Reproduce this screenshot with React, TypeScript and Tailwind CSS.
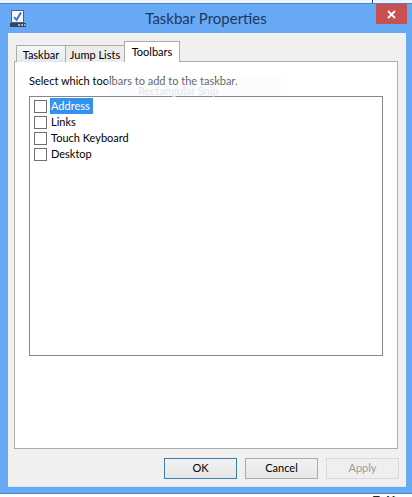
import React from 'react';

const TOOLBARS = ['Address', 'Links', 'Touch Keyboard', 'Desktop'];

const TitleIcon = () => (
  <svg width="18" height="20" viewBox="0 0 18 20" className="shrink-0">
    <rect x="1.5" y="0.5" width="12" height="12" fill="#f4f6fa" stroke="#55606e" />
    <path d="M4 7l2.5 3L11 2.5" fill="none" stroke="#2f6fd0" strokeWidth="1.8" />
    <rect x="0" y="13" width="16" height="4" fill="#34465c" />
    <rect x="8" y="14" width="2" height="2" fill="#9db4cc" />
    <rect x="11" y="14" width="2" height="2" fill="#9db4cc" />
    <rect x="14" y="14" width="1.5" height="2" fill="#9db4cc" />
  </svg>
);

const App: React.FC = () => {
  return (
    <div className="w-[412px] h-[497px] overflow-hidden bg-white text-[11px] text-black font-['Lato','Noto_Sans',sans-serif] relative">
      <div className="h-[3px] bg-[#eef3f9]" />
      <div className="w-[412px] h-[491px] border-y border-[#4c86c8] bg-[#68a9f6] flex flex-col">
        {/* title bar */}
        <div className="h-[29px] shrink-0 flex items-start relative">
          <div className="ml-[10px] mt-[6px]">
            <TitleIcon />
          </div>
          <div className="absolute inset-x-0 top-[4px] text-center text-[15px] leading-[20px] text-[#1b3a5c]">Taskbar Properties</div>
          <div className="w-[31px] h-[20px] ml-auto mr-[5px] bg-[#c75050] flex items-center justify-center">
            <svg width="9" height="9" viewBox="0 0 9 9">
              <path d="M1 1l7 7M8 1L1 8" stroke="#fff" strokeWidth="1.8" />
            </svg>
          </div>
        </div>

        {/* client area */}
        <div className="w-[398px] h-[454px] ml-[8px] bg-[#f0f0f0] border-b border-[#d8e8fb] px-[6px] pt-[8px] flex flex-col">
          {/* tabs */}
          <div className="h-[21px] flex items-end pl-[2px] relative z-10 -mb-px">
            <div className="w-[50px] h-[17px] border border-b-0 border-[#acacac] bg-gradient-to-b from-[#f4f8fc] to-[#e4e9ee] flex items-center justify-center leading-none">Taskbar</div>
            <div className="w-[59px] h-[17px] border border-l-0 border-b-0 border-[#acacac] bg-[#ececec] flex items-center justify-center leading-none">Jump Lists</div>
            <div className="w-[56px] h-[21px] -ml-px border border-b-0 border-[#acacac] bg-white flex items-start pt-[4px] justify-center leading-none">Toolbars</div>
          </div>

          {/* tab panel */}
          <div className="w-[384px] h-[388px] border border-[#acacac] bg-white pl-[14px] pt-[13px]">
            <div className="leading-[11px]">Select which toolbars to add to the taskbar.</div>
            <div className="w-[354px] h-[260px] mt-[10px] border border-[#828790] bg-white pl-[4px] pt-[1px] flex flex-col">
              {TOOLBARS.map((name, i) => (
                <div key={name} className="h-[16px] flex items-center gap-[3px]">
                  <div className="w-[13px] h-[13px] border border-[#707070] bg-white" />
                  <span className={i === 0 ? 'bg-[#3391f0] text-white px-[1px] w-[43px] leading-[16px]' : 'px-[1px] leading-[16px]'}>{name}</span>
                </div>
              ))}
            </div>
          </div>

          {/* buttons */}
          <div className="mt-[9px] pr-[1px] flex justify-end gap-[8px]">
            <div className="w-[73px] h-[21px] border border-[#3c7fb1] bg-gradient-to-b from-[#f2f2f2] to-[#e6e6e6] flex items-center justify-center">OK</div>
            <div className="w-[73px] h-[21px] border border-[#acacac] bg-gradient-to-b from-[#f2f2f2] to-[#e6e6e6] flex items-center justify-center">Cancel</div>
            <div className="w-[73px] h-[21px] border border-[#d9d9d9] bg-[#efefef] text-[#9a9a9a] flex items-center justify-center">Apply</div>
          </div>
        </div>
      </div>

      {/* ghost of a window behind the glass */}
      <div className="absolute left-[107px] top-[77px] w-[174px] h-[19px] bg-[#f6f8fb]/40 pointer-events-none" />
      <div className="absolute left-[138px] top-[86px] leading-[10px] text-[#e3e6ea] pointer-events-none">Rectangular Snip</div>

      {/* bits of what lies behind the window */}
      <div className="absolute left-[372px] top-0 w-px h-[3px] bg-[#444]" />
      <div className="absolute left-[372px] top-[495px] h-[2px] w-[40px] overflow-hidden">
        <div className="-mt-px text-[14px] font-bold leading-[14px] tracking-[2px] text-[#222]">Edit</div>
      </div>
    </div>
  );
};

export default App;
